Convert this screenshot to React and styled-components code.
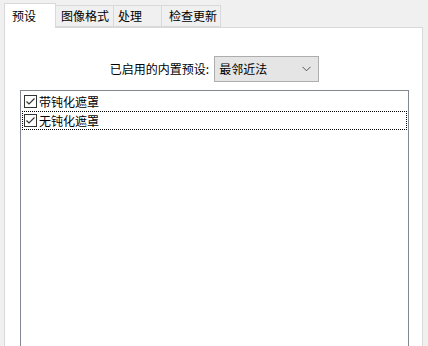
import React from 'react';
import styled, { createGlobalStyle } from 'styled-components';

const GlobalStyle = createGlobalStyle`
  html, body {
    margin: 0;
    padding: 0;
    background: #f0f0f0;
    overflow: hidden;
  }
  body {
    font-family: "Noto Sans CJK SC", "Noto Sans", sans-serif;
    font-size: 12px;
    color: #000;
  }
`;

const Window = styled.div`
  width: 428px;
  height: 346px;
  display: flex;
  flex-direction: column;
  padding-top: 2px;
  box-sizing: border-box;
`;

const TabStrip = styled.div`
  display: flex;
  align-items: flex-end;
  padding-left: 4px;
  height: 25px;
  position: relative;
  z-index: 1;
`;

const Tab = styled.div`
  box-sizing: border-box;
  height: ${({ $active }) => ($active ? '25px' : '22px')};
  width: ${({ $w }) => $w}px;
  margin-bottom: ${({ $active }) => ($active ? '-1px' : '0')};
  background: ${({ $active }) => ($active ? '#fff' : '#f0f0f0')};
  border: 1px solid #d9d9d9;
  border-bottom: ${({ $active }) => ($active ? 'none' : '1px solid #d9d9d9')};
  margin-left: ${({ $first }) => ($first ? '0' : '-1px')};
  display: flex;
  align-items: center;
  padding-left: ${({ $pad }) => $pad}px;
  padding-bottom: ${({ $active }) => ($active ? '1px' : '0')};
  white-space: nowrap;
  line-height: 1;
`;

const Panel = styled.div`
  flex: 1;
  margin: 0 5px 0 4px;
  background: #fff;
  border: 1px solid #d9d9d9;
  border-bottom: none;
  display: flex;
  flex-direction: column;
  padding-top: 28px;
`;

const PresetRow = styled.div`
  display: flex;
  align-items: center;
  justify-content: center;
  gap: 5px;
  padding-left: 2px;
`;

const Label = styled.span`
  line-height: 1;
`;

const Combo = styled.div`
  box-sizing: border-box;
  width: 105px;
  height: 26px;
  background: #e5e5e5;
  border: 1px solid #adadad;
  display: flex;
  align-items: center;
  justify-content: space-between;
  padding: 0 7px 0 4px;
  line-height: 1;
`;

const ListBox = styled.div`
  flex: 1;
  margin: 8px 13px 0 15px;
  border: 1px solid #828790;
  border-bottom: none;
  padding: 1px 1px 0;
  background: #fff;
`;

const Item = styled.div`
  box-sizing: border-box;
  height: 19px;
  display: flex;
  align-items: center;
  gap: 2px;
  padding-left: 1px;
  border: 1px dotted ${({ $focused }) => ($focused ? '#000' : 'transparent')};
  line-height: 1;
`;

const Box = styled.span`
  box-sizing: border-box;
  width: 13px;
  height: 13px;
  border: 1px solid #333;
  background: #fff;
  display: flex;
  align-items: center;
  justify-content: center;
`;

const Check = () => (
  <svg width="11" height="11" viewBox="0 0 11 11">
    <path d="M1.5 5.5 L4 8 L9.5 2.5" fill="none" stroke="#333" strokeWidth="1.2" />
  </svg>
);

const Chevron = () => (
  <svg width="9" height="6" viewBox="0 0 9 6">
    <path d="M0.5 0.8 L4.5 4.8 L8.5 0.8" fill="none" stroke="#555" strokeWidth="1" />
  </svg>
);

const tabs = [
  { label: '预设', w: 52, pad: 7 },
  { label: '图像格式', w: 59, pad: 5 },
  { label: '处理', w: 49, pad: 4 },
  { label: '检查更新', w: 60, pad: 7 },
];

const items = ['带钝化遮罩', '无钝化遮罩'];

export default function App() {
  return (
    <>
      <GlobalStyle />
      <Window>
        <TabStrip>
          {tabs.map((t, i) => (
            <Tab key={t.label} $active={i === 0} $first={i === 0} $w={t.w} $pad={t.pad}>
              {t.label}
            </Tab>
          ))}
        </TabStrip>
        <Panel>
          <PresetRow>
            <Label>已启用的内置预设:</Label>
            <Combo>
              <span>最邻近法</span>
              <Chevron />
            </Combo>
          </PresetRow>
          <ListBox>
            {items.map((label, i) => (
              <Item key={label} $focused={i === 1}>
                <Box>
                  <Check />
                </Box>
                {label}
              </Item>
            ))}
          </ListBox>
        </Panel>
      </Window>
    </>
  );
}
